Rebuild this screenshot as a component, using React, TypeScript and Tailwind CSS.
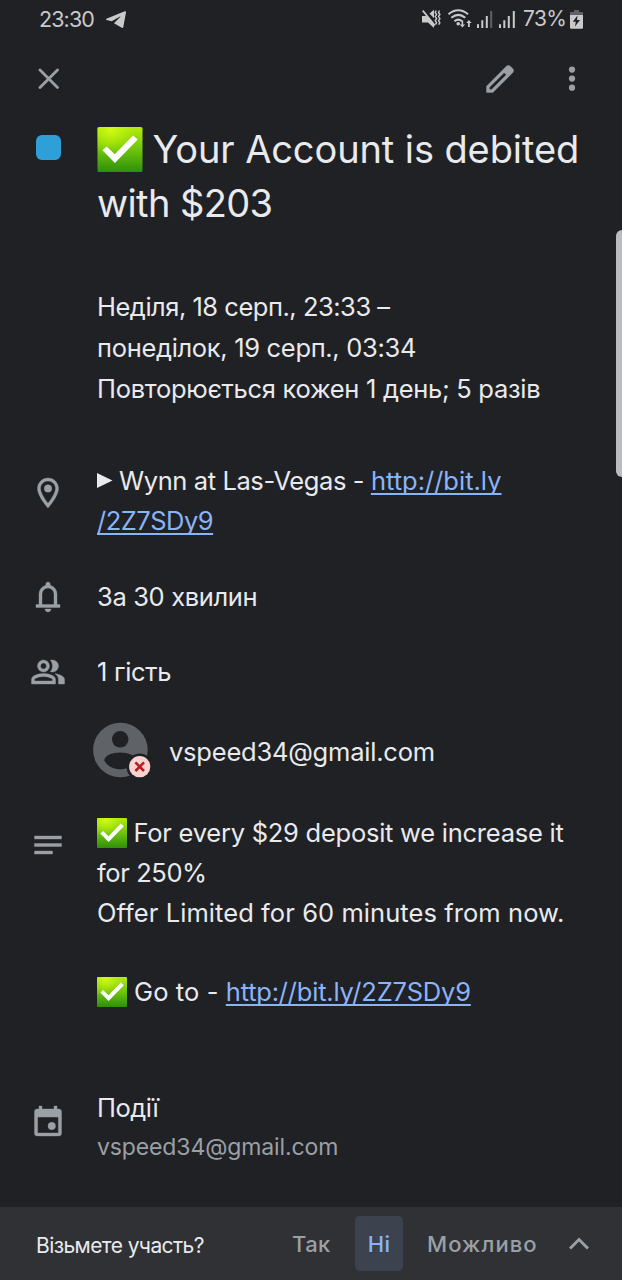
import type { ReactNode } from 'react';
import { clsx } from 'clsx';

const LINK = 'text-[#8ab4f8] underline decoration-2 underline-offset-[3px] [text-decoration-skip-ink:none]';

const PATHS = {
  pin: 'M12 2C8.13 2 5 5.13 5 9c0 5.25 7 13 7 13s7-7.75 7-13c0-3.87-3.13-7-7-7zM7 9c0-2.76 2.24-5 5-5s5 2.24 5 5c0 2.88-2.88 7.19-5 9.88C9.92 16.21 7 11.85 7 9z',
  bell: 'M4 19v-2h2v-7q0-2.075 1.25-3.688T10.5 4.2v-.7q0-.625.438-1.063T12 2t1.063.438T13.5 3.5v.7q2 .5 3.25 2.113T18 10v7h2v2zM12 22q-.825 0-1.412-.587T10 20h4q0 .825-.587 1.413T12 22m-4-5h8v-7q0-1.65-1.175-2.825T12 6 9.175 7.175 8 10z',
  people:
    'M1 20v-2.8q0-.85.438-1.562T2.6 14.55q1.55-.775 3.15-1.162T9 13t3.25.388 3.15 1.162q.725.375 1.163 1.088T17 17.2V20zm18 0v-3q0-1.1-.612-2.113T16.65 13.15q1.275.15 2.4.513t2.1.887q.9.5 1.375 1.112T23 17v3zM9 12q-1.65 0-2.825-1.175T5 8t1.175-2.825T9 4t2.825 1.175T13 8t-1.175 2.825T9 12m10-4q0 1.65-1.175 2.825T15 12q-.275 0-.7-.062t-.7-.138q.675-.8 1.038-1.775T15 8t-.362-2.025T13.6 4.2q.35-.125.7-.163T15 4q1.65 0 2.825 1.175T19 8M3 18h12v-.8q0-.275-.137-.5t-.363-.35q-1.35-.675-2.725-1.012T9 15t-2.775.338T3.5 16.35q-.225.125-.363.35T3 17.2zm6-8q.825 0 1.413-.587T11 8t-.587-1.412T9 6t-1.412.588T7 8t.588 1.413T9 10',
  notes: 'M3 6h18v2H3zM3 11h18v2H3zM3 16h12v2H3z',
  calendar:
    'M6 2h2v2h8V2h2v2h1.2a1.8 1.8 0 0 1 1.8 1.8v14.4a1.8 1.8 0 0 1-1.8 1.8H4.8A1.8 1.8 0 0 1 3 20.2V5.8A1.8 1.8 0 0 1 4.8 4H6zM5.1 9.4V20h13.8V9.4z',
  edit: 'M5 19h1.425L16.2 9.225 14.775 7.8 5 17.575zm-2 2v-4.25L16.2 3.575q.3-.275.663-.425t.762-.15.775.15.65.45L20.425 5q.3.275.438.65T21 6.4q0 .4-.137.763t-.438.687L7.25 21z',
};

function Icon({ name, className, children }: { name: keyof typeof PATHS; className?: string; children?: ReactNode }) {
  return (
    <svg viewBox="0 0 24 24" className={clsx('size-9 shrink-0 fill-[#9aa0a6] stroke-[#9aa0a6]', className)} strokeWidth="0.25">
      <path fillRule="evenodd" d={PATHS[name]} />
      {children}
    </svg>
  );
}

function CheckEmoji({ className }: { className: string }) {
  return (
    <svg viewBox="0 0 45 45" className={clsx('shrink-0', className)} aria-hidden="true">
      <defs>
        <linearGradient id="check-base" x1="0" y1="0" x2="0" y2="1">
          <stop offset="0" stopColor="#b4ec0c" />
          <stop offset="0.5" stopColor="#6ec40c" />
          <stop offset="1" stopColor="#2f8f0a" />
        </linearGradient>
        <radialGradient id="check-glow" cx="0.3" cy="0.05" r="0.6">
          <stop offset="0" stopColor="#d2fb10" />
          <stop offset="1" stopColor="#b4ec0c" stopOpacity="0" />
        </radialGradient>
      </defs>
      <rect width="45" height="45" rx="1.6" fill="url(#check-base)" />
      <rect width="45" height="45" rx="1.6" fill="url(#check-glow)" />
      <path d="M5 23.2l4.2-3.8 8 7.8L35.6 8.4l4.6 4L17.4 36z" fill="#fff" />
    </svg>
  );
}

// One event row: icon gutter on the left, content on the right
function Row({ icon, className, children }: { icon: ReactNode; className?: string; children: ReactNode }) {
  return (
    <section className={clsx('grid grid-cols-[97px_1fr]', className)}>
      <div className="flex items-start pl-[30.3px]">{icon}</div>
      <div className="whitespace-nowrap">{children}</div>
    </section>
  );
}

function StatusBar() {
  return (
    <header className="flex h-[38px] items-center justify-between pl-[39px] pr-[39px] text-[#c9cacc]">
      <div className="flex items-center gap-3">
        <span className="text-[21.5px] tracking-[-0.9px]">23:30</span>
        <svg viewBox="0 0 20 17" className="h-[17px] w-5 fill-current">
          <path d="M.4 7.8 18.8.3c.8-.3 1.3.1 1.2.9L17.3 16c-.2.9-.8 1.1-1.5.7L8 12.2l6.4-6.4c.2-.3 0-.5-.4-.3L5.7 10.3.6 9c-.8-.2-.8-.9-.2-1.2z" />
        </svg>
      </div>
      <div className="flex items-center">
        <svg viewBox="0 0 94 20" className="h-5 w-[94px] fill-current">
          {/* muted speaker with vibration marks */}
          <path d="M0 7h4.5l7.5 7.5V19l-6-5.5H0zM7.5 4.5 12 .8v8.4z" />
          <path d="M.8 1.6 12.8 16.5" fill="none" stroke="currentColor" strokeWidth="1.7" />
          <path d="M14.2 1.5l-1 2 1.4 2-1.4 2 1.4 2.2-1.4 2 1.4 2-1.2 2M17.5 1.5l-1 2 1.4 2-1.4 2 1.4 2.2-1.4 2 1.4 2-1.2 2" fill="none" stroke="currentColor" strokeWidth="1.4" />
          <g fill="none" stroke="currentColor" strokeWidth="2">
            <path d="M26.5 5.2c6-5.3 13.5-5.3 19.5 0M29.3 8.8c4.5-3.8 9.5-3.8 14 0M32.4 12.2c2.6-2.1 5.2-2.1 7.6 0" />
          </g>
          <circle cx="36.2" cy="14.8" r="1.8" />
          <path d="M41.2 11.5v4h1.9l-2.7 3-2.7-3h1.9v-4zM46 18v-4h-1.8l2.7-3 2.7 3h-1.8v4z" />
          <path d="M55 15.2h2V19h-2zM59.3 11.3h2V19h-2zM63.8 7h2v12h-2z" />
          <path d="M68.2 2h2v17h-2z" fill="#606165" />
          <path d="M77 15.2h2V19h-2zM81.3 11.3h2V19h-2zM85.8 7h2v12h-2zM90.8 2h2v17h-2z" />
        </svg>
        <span className="ml-[7px] w-[47px] text-[21px] tracking-[-0.6px]">73%</span>
        <svg viewBox="0 0 13 19" className="h-[19px] w-[13px]">
          <path d="M4 0h5v2h4v3.5H0V2h4z" fill="#606165" />
          <path d="M0 5h13v12.5q0 1.2-1.2 1.2H1.2Q0 18.7 0 17.5z" fill="#c9cacc" />
          <path d="M7.5 5.5 2.8 11.8h3L5 16.5l5-6.5H7z" fill="#202124" />
        </svg>
      </div>
    </header>
  );
}

function Toolbar() {
  return (
    <nav className="flex h-[84px] items-start justify-between pl-[38px] pr-10">
      <button aria-label="close" className="mt-[30px]">
        <svg viewBox="0 0 21 21" className="size-[21px] stroke-[#9aa0a6]" fill="none" strokeWidth="2.8" strokeLinecap="round">
          <path d="M2 2l17.5 17.5M19.5 2 2 19.5" />
        </svg>
      </button>
      <div className="flex items-start">
        <button aria-label="edit" className="mt-[22.5px]">
          <Icon name="edit" />
        </button>
        <button aria-label="more" className="ml-[44.5px] mt-[28px]">
          <svg viewBox="0 0 20 26" className="h-[26px] w-5 fill-[#9aa0a6]">
            <circle cx="10" cy="3.6" r="3.1" />
            <circle cx="10" cy="12.6" r="3.1" />
            <circle cx="10" cy="21.7" r="3.1" />
          </svg>
        </button>
      </div>
    </nav>
  );
}

function Avatar() {
  return (
    <svg viewBox="0 0 60 56" className="-ml-1 h-14 w-[60px]">
      <circle cx="27.4" cy="28" r="27.3" fill="#5f6368" />
      <circle cx="27.2" cy="17.3" r="8.3" fill="#202124" />
      <path d="M11.3 38.8c0-11 31.8-11 31.8 0-7 11.3-24.8 11.3-31.8 0z" fill="#202124" />
      <circle cx="46.7" cy="44.7" r="13.3" fill="#202124" />
      <circle cx="46.7" cy="44.7" r="10.6" fill="#fad2cf" />
      <path d="M42.4 40.4l8.6 8.6M51 40.4 42.4 49" stroke="#b81c22" strokeWidth="2.5" />
    </svg>
  );
}

function RsvpBar() {
  return (
    <footer className="mt-auto flex h-[73px] items-center bg-[#303135] pl-9 font-medium text-[#9aa0a6]">
      <span className="w-[240px] pt-1 text-[21px] font-normal tracking-[-0.58px] text-[#e8eaed]">Візьмете участь?</span>
      <button className="ml-4 w-[63px] pt-0.5 text-left text-[22px] tracking-[0.4px]">Так</button>
      <button className="h-[55px] w-12 rounded-[5px] bg-[#3c434e] pt-0.5 text-[22px] tracking-[0.4px] text-[#8ab4f8]">Ні</button>
      <button className="ml-6 w-[142px] pt-0.5 text-left text-[22px] tracking-[1.1px]">Можливо</button>
      <svg viewBox="0 0 20 13" className="h-[13px] w-5 stroke-[#9aa0a6]" fill="none" strokeWidth="3">
        <path d="M1 11.5 10 2.5l9 9" />
      </svg>
    </footer>
  );
}

export default function App() {
  return (
    <div className="relative flex h-[1280px] w-[622px] flex-col overflow-hidden bg-[#202124] font-['Inter','Noto_Sans',sans-serif] text-[#e8eaed]">
      <StatusBar />
      <Toolbar />

      <Row icon={<span className="ml-[5.5px] mt-[13px] size-[25px] rounded-[6px] bg-[#2f9fd8]" />}>
        <h1 className="text-[38px] leading-[54px]">
          <span className="flex items-center tracking-[-0.1px]">
            <CheckEmoji className="mr-[9.5px] h-[45px] w-[46px]" />
            Your Account is debited
          </span>
          <span className="block tracking-[-0.6px]">with $203</span>
        </h1>
      </Row>

      <Row icon={null} className="mt-14 text-[25.5px] leading-[41px]">
        <p className="tracking-[-0.48px]">Неділя, 18 серп., 23:33 –</p>
        <p className="tracking-[-0.32px]">понеділок, 19 серп., 03:34</p>
        <p className="tracking-[-0.29px]">Повторюється кожен 1 день; 5 разів</p>
      </Row>

      <Row
        className="mt-[52px] text-[25.5px] leading-[40px]"
        icon={
          <Icon name="pin" className="mt-3.5">
            <circle cx="12" cy="9" r="2.5" />
          </Icon>
        }
      >
        <p className="flex items-center">
          <svg viewBox="0 0 16 16" className="mr-1.5 size-4 fill-current">
            <path d="M0 0l15.5 7.5L0 15z" />
          </svg>
          <span className="whitespace-pre tracking-[-0.4px]">Wynn at Las-Vegas - </span>
          <a className={LINK}>http://bit.ly</a>
        </p>
        <p>
          <a className={clsx(LINK, 'tracking-[-0.5px]')}>/2Z7SDy9</a>
        </p>
      </Row>

      <Row className="mt-9 text-[25.5px] leading-[40px]" icon={<Icon name="bell" className="mt-0.5" />}>
        <p className="tracking-[-0.35px]">За 30 хвилин</p>
      </Row>

      <Row className="mt-[35px] text-[25.5px] leading-[40px]" icon={<Icon name="people" className="mt-[1.5px]" />}>
        <p className="tracking-[-0.3px]">1 гість</p>
      </Row>

      <Row className="mt-[30px] text-[25.5px] leading-[40px]" icon={null}>
        <div className="flex items-center">
          <Avatar />
          <span className="ml-4 pt-[3px] tracking-[-0.22px]">vspeed34@gmail.com</span>
        </div>
      </Row>

      <Row className="mt-[35px] text-[25.5px] leading-[40px]" icon={<Icon name="notes" className="mt-[14px]" />}>
        <p className="flex items-center tracking-[-0.25px]">
          <CheckEmoji className="mr-[6.5px] size-[30px]" />
          For every $29 deposit we increase it
        </p>
        <p className="tracking-[-0.4px]">for 250%</p>
        <p className="tracking-[0.07px]">Offer Limited for 60 minutes from now.</p>
        <p className="mt-[39px] flex items-center">
          <CheckEmoji className="mr-[7px] size-[30px]" />
          <span className="whitespace-pre tracking-[0.1px]">Go to - </span>
          <a className={clsx(LINK, 'tracking-[-0.2px]')}>http://bit.ly/2Z7SDy9</a>
        </p>
      </Row>

      <Row
        className="mt-[76px] text-[25.5px] leading-[40px]"
        icon={
          <Icon name="calendar" className="mt-[14.5px]">
            <circle cx="14.5" cy="15.3" r="2.5" />
          </Icon>
        }
      >
        <p className="tracking-[-0.5px]">Події</p>
        <p className="-mt-px text-[23px] tracking-[-0.12px] text-[#9aa0a6]">vspeed34@gmail.com</p>
      </Row>

      <RsvpBar />

      {/* edge panel handle overlapping the content */}
      <div className="absolute right-0 top-[230px] h-[247px] w-1.5 rounded-l-[6px] bg-[#bcbbbd]" />
    </div>
  );
}
